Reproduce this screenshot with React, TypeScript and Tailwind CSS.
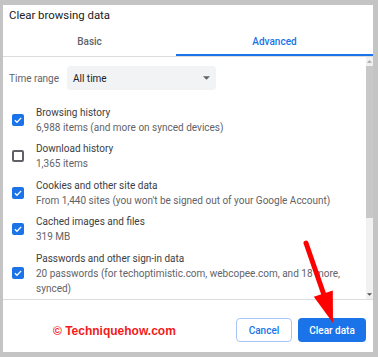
const ROWS = [
  { title: "Browsing history", lines: ["6,988 items (and more on synced devices)"], checked: true },
  { title: "Download history", lines: ["1,365 items"], checked: false },
  { title: "Cookies and other site data", lines: ["From 1,440 sites (you won't be signed out of your Google Account)"], checked: true },
  { title: "Cached images and files", lines: ["319 MB"], checked: true },
  {
    title: "Passwords and other sign-in data",
    lines: ["20 passwords (for techoptimistic.com, webcopee.com, and 18 more,", "synced)"],
    checked: true,
  },
];

const Checkbox = ({ checked }: { checked: boolean }) =>
  checked ? (
    <span className="flex h-[12px] w-[12px] shrink-0 items-center justify-center rounded-[2px] bg-[#1a73e8]">
      <svg viewBox="0 0 12 12" className="h-[10px] w-[10px]">
        <path d="M2.2 6.2 L4.8 8.7 L9.8 3.4" fill="none" stroke="white" strokeWidth="1.6" />
      </svg>
    </span>
  ) : (
    <span className="h-[12px] w-[12px] shrink-0 rounded-[2px] border-2 border-[#5f6368]" />
  );

export default function App() {
  return (
    <div
      className="relative h-[357px] w-[378px] overflow-hidden bg-[#c4c4c4] pl-[3px] pt-[5px]"
      style={{ fontFamily: "Roboto, 'Liberation Sans', sans-serif" }}
    >
      <div className="flex h-[347px] w-[370px] flex-col bg-white">
        <div className="h-[20px] pl-[6px] pt-[2px] text-[11.4px] leading-[16px] text-[#202124]">Clear browsing data</div>

        <div className="flex h-[32px] border-b border-[#dadce0] text-[10px] font-medium">
          <div className="flex w-[173px] items-center justify-center pt-[1px] text-[#5f6368]">Basic</div>
          <div className="flex w-[197px] items-center justify-center border-b-2 border-[#1a73e8] pt-[3px] text-[#1a73e8]">
            Advanced
          </div>
        </div>

        <div className="flex h-[242px]">
          <div className="flex flex-1 flex-col">
            <div className="flex items-center pl-[6px] pt-[9px]">
              <span className="w-[58px] text-[10px] text-[#5f6368]">Time range</span>
              <div className="flex h-[24px] w-[149px] items-center justify-between rounded-[4px] bg-[#f1f3f4] pl-[6px] pr-[6px] text-[10px] text-[#202124]">
                <span>All time</span>
                <svg viewBox="0 0 8 4" className="h-[4px] w-[7px]">
                  <path d="M0 0 H8 L4 4 Z" fill="#5f6368" />
                </svg>
              </div>
            </div>

            <div className="mt-[14.5px] flex flex-col gap-[6.5px]">
              {ROWS.map((row) => (
                <div key={row.title} className="flex items-center pl-[9px]">
                  <Checkbox checked={row.checked} />
                  <div className="ml-[12px] flex flex-col text-[10px] leading-[15px]">
                    <span className="text-[#3c4043]">{row.title}</span>
                    {row.lines.map((line) => (
                      <span key={line} className="text-[#5f6368]">
                        {line}
                      </span>
                    ))}
                  </div>
                </div>
              ))}
            </div>
          </div>

          <div className="flex w-[7px] flex-col bg-[#f1f1f1]">
            <div className="flex h-[9px] items-center justify-center">
              <svg viewBox="0 0 6 3" className="h-[3px] w-[5px]">
                <path d="M0 3 H6 L3 0 Z" fill="#a3a3a3" />
              </svg>
            </div>
            <div className="h-[152px] bg-[#c8c8c8]" />
            <div className="flex-1" />
            <div className="flex h-[9px] items-center justify-center">
              <svg viewBox="0 0 6 3" className="h-[3px] w-[5px]">
                <path d="M0 0 H6 L3 3 Z" fill="#505050" />
              </svg>
            </div>
          </div>
        </div>

        <div className="flex flex-1 items-start border-t border-[#dadce0] pt-[18px]">
          <span
            className="ml-[50px] mt-[4px] text-[12px] font-bold text-[#f21b1b]"
            style={{ fontFamily: "'Liberation Sans', Arial, sans-serif" }}
          >
            © Techniquehow.com
          </span>
          <div className="ml-auto mr-[7px] flex gap-[6px]">
            <button className="h-[24px] w-[56px] rounded-[4px] border border-[#a8c4f4] bg-white text-[10px] font-medium text-[#1a73e8]">
              Cancel
            </button>
            <button className="h-[24px] w-[68px] rounded-[4px] bg-[#1a73e8] text-[10px] font-medium text-white">
              Clear data
            </button>
          </div>
        </div>
      </div>

      <svg className="pointer-events-none absolute left-0 top-0" width="378" height="357" viewBox="0 0 378 357">
        <line x1="306" y1="243" x2="324" y2="295" stroke="#ff0000" strokeWidth="5" strokeLinecap="round" />
        <path d="M313.8 296.8 L332.8 290.4 L333 323 Z" fill="#ff0000" />
      </svg>
    </div>
  );
}
